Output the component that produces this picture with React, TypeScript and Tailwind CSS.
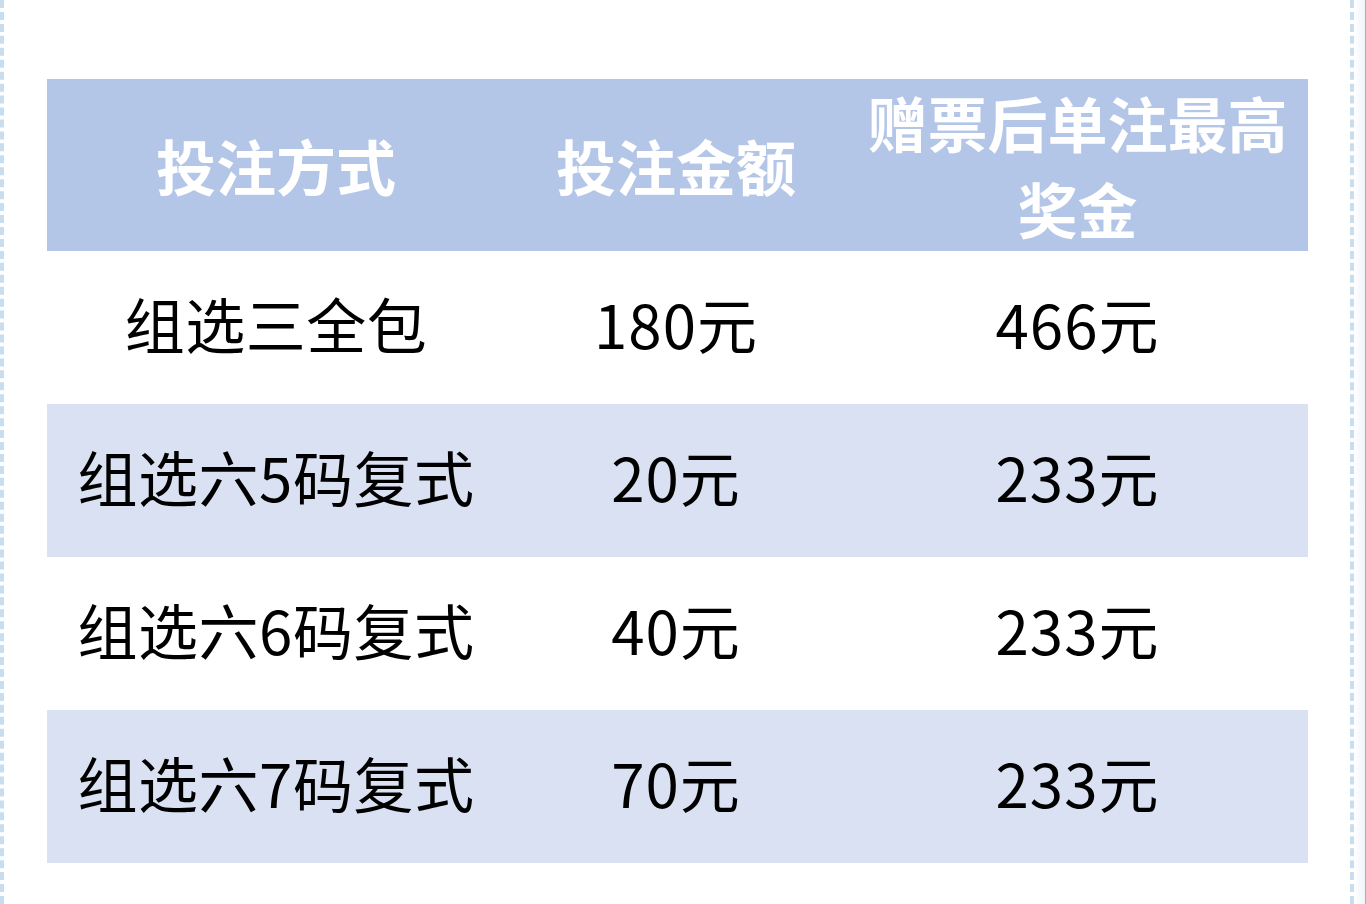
const rows = [
  { name: '组选三全包', cost: '180元', prize: '466元' },
  { name: '组选六5码复式', cost: '20元', prize: '233元' },
  { name: '组选六6码复式', cost: '40元', prize: '233元' },
  { name: '组选六7码复式', cost: '70元', prize: '233元' },
];

const font = "font-['Microsoft_YaHei','Noto_Sans_CJK_SC',sans-serif]";

export default function App() {
  return (
    <div className={`flex w-[1366px] h-[904px] bg-white ${font}`}>
      {/* left dashed edge */}
      <div className="w-[4px] h-full border-l-4 border-dashed border-[#c6def0]" />

      <div className="flex-1 pl-[43px] pt-[79px]">
        <div className="w-[1261px]">
          {/* header */}
          <div className="grid grid-cols-[458px_342px_461px] h-[172px] bg-[#b4c6e7] text-white font-bold text-[60px] leading-[86px]">
            <div className="flex items-center justify-center pb-[14px]">投注方式</div>
            <div className="flex items-center justify-center pb-[14px]">投注金额</div>
            <div className="flex items-center justify-center text-center pb-[14px]">
              <span>
                赠票后单注最高
                <br />
                奖金
              </span>
            </div>
          </div>

          {rows.map((r, i) => (
            <div
              key={r.name}
              className={`grid grid-cols-[458px_342px_461px] h-[153px] text-[60px] text-black ${i % 2 === 1 ? 'bg-[#d9e1f2]' : 'bg-white'}`}
            >
              <div className="flex items-center justify-center pb-[10px] tracking-[0.5px]">{r.name}</div>
              <div className="flex items-center justify-center pb-[10px] tracking-[1px]">{r.cost}</div>
              <div className="flex items-center justify-center pb-[10px] tracking-[1px]">{r.prize}</div>
            </div>
          ))}
        </div>
      </div>

      {/* right dashed edge */}
      <div className="w-[4px] h-full border-l-4 border-dashed border-[#c6def0]" />
      <div className="w-[12px] h-full bg-gradient-to-r from-white to-[#eef5fb] border-r border-[#8fb6d8]" />
    </div>
  );
}
